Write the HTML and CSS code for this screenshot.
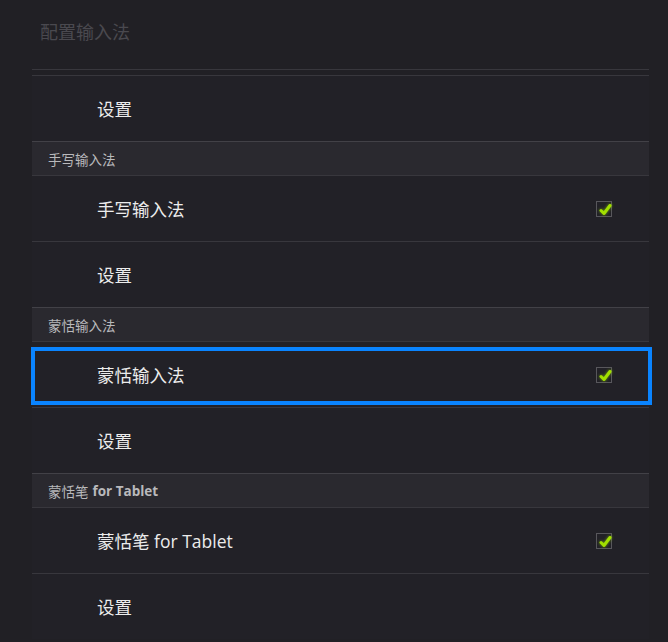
FILE: index.html
```html
<!DOCTYPE html>
<html lang="zh-CN">
<head>
<meta charset="utf-8">
<title>配置输入法</title>
<link rel="stylesheet" href="styles.css">
</head>
<body>
<div class="title">配置输入法</div>
<div class="list">
  <div class="row"><span class="label">设置</span></div>
  <div class="cat">手写输入法</div>
  <div class="row"><span class="label">手写输入法</span><span class="check"><svg viewBox="0 0 16 16" width="16" height="16"><path d="M4 8.5 L7 11.5 L13 3.5" /></svg></span></div>
  <div class="row"><span class="label">设置</span></div>
  <div class="cat">蒙恬输入法</div>
  <div class="row focused"><span class="label">蒙恬输入法</span><span class="check"><svg viewBox="0 0 16 16" width="16" height="16"><path d="M4 8.5 L7 11.5 L13 3.5" /></svg></span></div>
  <div class="row"><span class="label">设置</span></div>
  <div class="cat">蒙恬笔 <b>for Tablet</b></div>
  <div class="row"><span class="label">蒙恬笔 for Tablet</span><span class="check"><svg viewBox="0 0 16 16" width="16" height="16"><path d="M4 8.5 L7 11.5 L13 3.5" /></svg></span></div>
  <div class="row"><span class="label">设置</span></div>
</div>
</body>
</html>
```
FILE: styles.css
```css
html, body {
  margin: 0;
  padding: 0;
  background: #212025;
  height: 100%;
  overflow: hidden;
  font-family: "Open Sans", "Noto Sans CJK SC", sans-serif;
}
.title {
  height: 70px;
  margin: 0 19px 0 32px;
  padding-left: 8px;
  box-sizing: border-box;
  display: flex;
  align-items: center;
  color: #4a494f;
  font-size: 18px;
  border-bottom: 1px solid #38373d;
  padding-bottom: 7px;
}
.list {
  margin: 5px 19px 0 32px;
  background: #222127;
}
.row {
  position: relative;
  height: 65px;
  border-top: 1px solid #38373d;
  display: flex;
  align-items: center;
  padding-left: 65px;
  padding-right: 37px;
}
.label {
  flex: 1;
  color: #ececec;
  font-size: 17.5px;
}
.cat {
  height: 33px;
  border-top: 1px solid #424147;
  background: #2a292f;
  display: flex;
  align-items: center;
  padding-left: 16px;
  color: #b9b9bc;
  font-size: 13.5px;
}
.cat b {
  font-weight: 700;
  margin-left: 4px;
}
.check {
  width: 16px;
  height: 16px;
  box-sizing: border-box;
  border: 1px solid #58575c;
  display: flex;
}
.check svg {
  overflow: visible;
  filter: drop-shadow(0 0 1.5px rgba(150, 220, 0, 0.7));
}
.check path {
  fill: none;
  stroke: #a2e000;
  stroke-width: 3;
  stroke-linecap: round;
  stroke-linejoin: round;
}
.focused::after {
  content: "";
  position: absolute;
  left: -1px;
  right: -3px;
  top: 5px;
  bottom: 2px;
  border: 4px solid #0a84ff;
}
```
